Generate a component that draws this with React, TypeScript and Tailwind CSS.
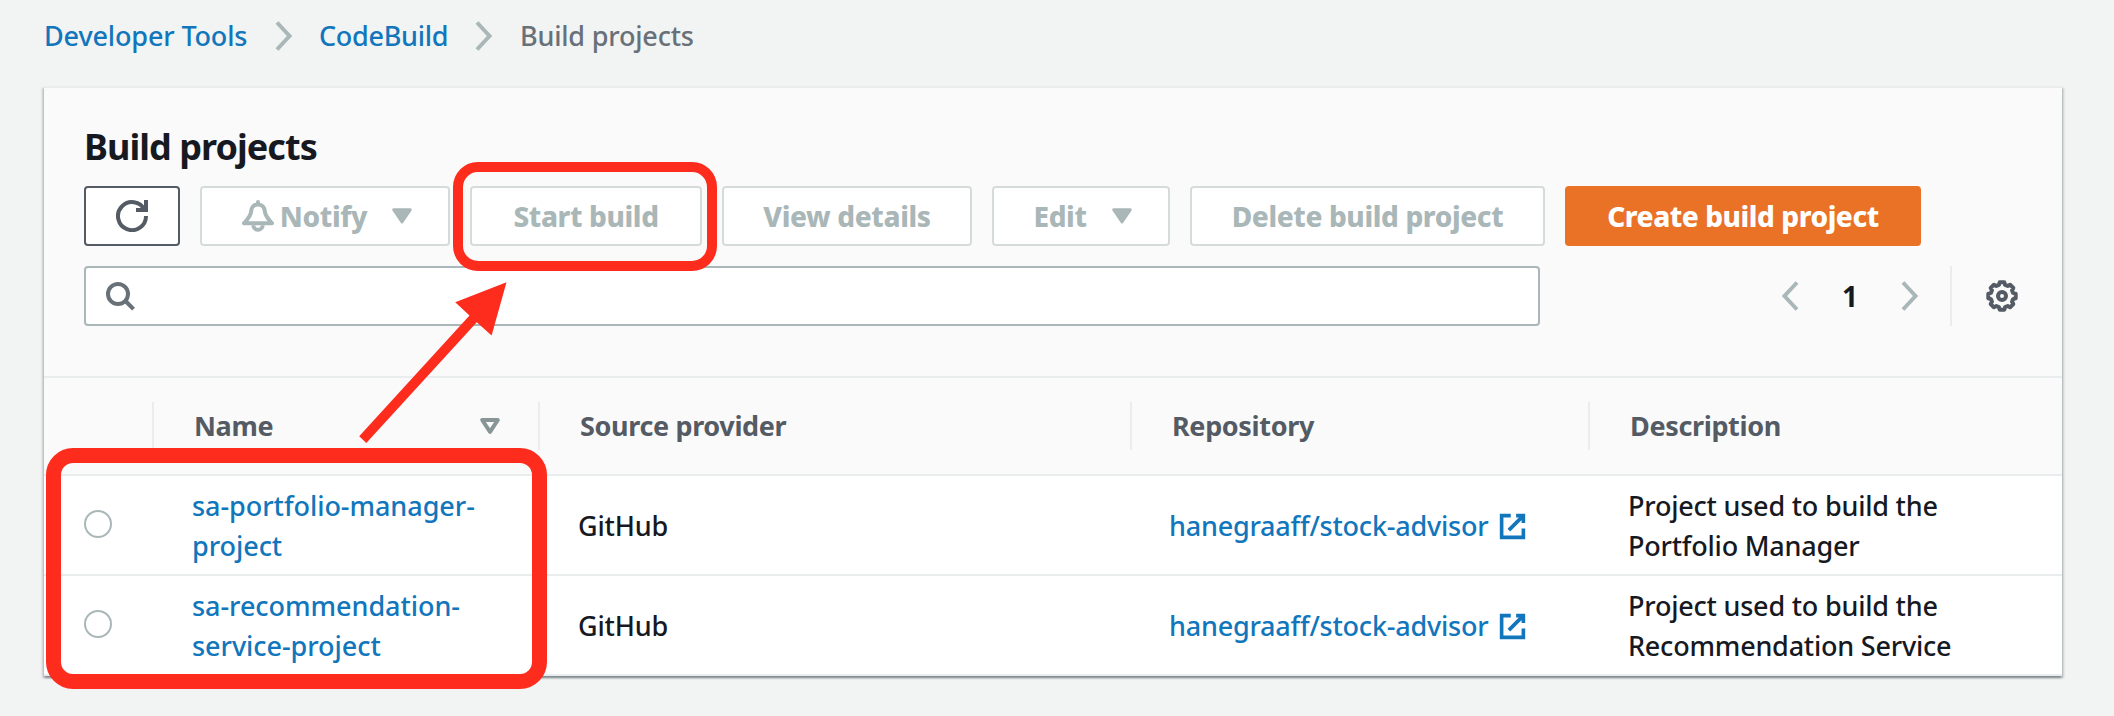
import type { ReactNode } from 'react';

const GEAR_PATH = (() => {
  const pts: string[] = [];
  for (let i = 0; i < 8; i++) {
    const a = i * 45;
    for (const [offset, radius] of [[-9.5, 6.95], [9.5, 6.95], [15.5, 5.75], [29.5, 5.75]]) {
      const t = ((a + offset) * Math.PI) / 180;
      pts.push(`${(8 + radius * Math.cos(t)).toFixed(2)} ${(8 + radius * Math.sin(t)).toFixed(2)}`);
    }
  }
  return `M${pts.join('L')}Z`;
})();

function Chevron({ left = false }: { left?: boolean }) {
  return (
    <svg width="20" height="32" viewBox="0 0 20 32" fill="none" stroke="#aab7b8" strokeWidth="4">
      <path d={left ? 'M17 2.5 4.5 16 17 29.5' : 'M3 2.5 15.5 16 3 29.5'} />
    </svg>
  );
}

function Caret() {
  return (
    <svg width="22" height="18" viewBox="0 0 22 18" fill="#aab7b8" stroke="#aab7b8" strokeWidth="3" strokeLinejoin="round">
      <path d="M2.7 2.7h16.6L11 15z" />
    </svg>
  );
}

function SortIcon() {
  return (
    <svg width="22" height="18" viewBox="0 0 22 18" fill="none" stroke="#879596" strokeWidth="4" strokeLinejoin="round">
      <path d="M3.2 3h15.6L11 14.8z" />
    </svg>
  );
}

function RefreshIcon() {
  return (
    <svg width="32" height="32" viewBox="0 0 16 16" fill="none" stroke="#545b64" strokeWidth="2">
      <path d="M10 5h5V0" />
      <path d="M15 8a7 7 0 1 1-.7-3" />
    </svg>
  );
}

function BellIcon() {
  return (
    <svg width="32" height="32" viewBox="0 0 16 16" fill="none" stroke="#aab7b8" strokeWidth="2" strokeLinejoin="round" strokeLinecap="round">
      <path d="M8 2.2C5.9 2.2 4.7 3.7 4.6 5.6 4.5 8 3 9.4 1 11.6h14C13 9.4 11.5 8 11.4 5.6 11.3 3.7 10.1 2.2 8 2.2zM8 2V1" />
      <path d="M5.7 12.6a2.3 2.3 0 0 0 4.6 0" strokeLinecap="butt" />
    </svg>
  );
}

function SearchIcon() {
  return (
    <svg width="32" height="32" viewBox="0 0 32 32" fill="none" stroke="#687078" strokeWidth="4">
      <circle cx="14" cy="14" r="10" />
      <path d="M21 20.5 29.5 29.2" />
    </svg>
  );
}

function GearIcon() {
  return (
    <svg width="32" height="32" viewBox="0 0 16 16" fill="none" stroke="#545b64" strokeWidth="2" strokeLinejoin="round">
      <path d={GEAR_PATH} />
      <circle cx="8" cy="8" r="2" />
    </svg>
  );
}

function ExternalIcon() {
  return (
    <svg width="29" height="29" viewBox="0 0 16 16" fill="none" stroke="#1176bb" strokeWidth="2">
      <path d="M10 2h4v4M6 10l8-8M14 9.05V14H2V2h5.04" />
    </svg>
  );
}

function DisabledButton({ className, children }: { className: string; children: ReactNode }) {
  return (
    <button
      className={`flex h-[60px] items-center justify-center whitespace-nowrap rounded-[4px] border-2 border-[#d5dbdb] bg-white text-[28px] font-extrabold leading-10 tracking-[-0.38px] text-[#aab7b8] ${className}`}
    >
      {children}
    </button>
  );
}

const COLUMNS = 'grid grid-cols-[108px_386px_592px_458px_474px]';

function HeaderCell({ children }: { children: ReactNode }) {
  return (
    <div className="flex items-center justify-between border-l-2 border-[#eaeded] pl-10 pr-[37px] text-[27px] font-bold leading-10 tracking-[-0.35px] text-[#545b64]">
      {children}
    </div>
  );
}

const PROJECTS = [
  { name: ['sa-portfolio-manager-', 'project'], description: ['Project used to build the', 'Portfolio Manager'] },
  { name: ['sa-recommendation-', 'service-project'], description: ['Project used to build the', 'Recommendation Service'] },
];

export default function App() {
  return (
    <div className="relative h-[716px] w-[2114px] overflow-hidden bg-[#f2f3f3] font-['Noto_Sans',sans-serif] text-[27px] font-[460] leading-10 text-[#16191f]">
      <nav className="flex h-[86px] items-start pl-[44px] pt-[16px]">
        <a className="w-[230px] tracking-[-0.15px] text-[#1176bb]">Developer Tools</a>
        <span className="w-[45px] pt-[4px]"><Chevron /></span>
        <a className="w-[155px] tracking-[-0.3px] text-[#1176bb]">CodeBuild</a>
        <span className="w-[46px] pt-[4px]"><Chevron /></span>
        <span className="tracking-[-0.2px] text-[#687078]">Build projects</span>
      </nav>

      <main className="ml-11 w-[2018px] border-t-2 border-[#eaeded] bg-white shadow-[0_2px_2px_0_rgba(0,28,36,0.3),2px_2px_2px_0_rgba(0,28,36,0.15),-2px_2px_2px_0_rgba(0,28,36,0.15)]">
        <header className="h-[290px] border-b-2 border-[#eaeded] bg-[#fafafa] pl-10 pt-[39px]">
          <h1 className="h-[59px] text-[36px] font-bold leading-10 tracking-[-0.95px]">Build projects</h1>
          <div className="flex gap-5">
            <button className="flex h-[60px] w-24 items-center justify-center rounded-[4px] border-2 border-[#545b64] bg-white">
              <RefreshIcon />
            </button>
            <DisabledButton className="w-[250px] pl-[5px]">
              <BellIcon />
              <span className="ml-[6px]">Notify</span>
              <span className="ml-[24px]"><Caret /></span>
            </DisabledButton>
            <DisabledButton className="w-[232px]">Start build</DisabledButton>
            <DisabledButton className="w-[250px]">View details</DisabledButton>
            <DisabledButton className="w-[178px] pl-[4px]">
              <span>Edit</span>
              <span className="ml-[24px]"><Caret /></span>
            </DisabledButton>
            <DisabledButton className="w-[355px]">Delete build project</DisabledButton>
            <button className="flex h-[60px] w-[356px] items-center justify-center whitespace-nowrap rounded-[4px] bg-[#ea7226] text-[28px] font-extrabold tracking-[-0.45px] text-white">
              Create build project
            </button>
          </div>
          <div className="mt-5 flex h-[60px] items-center">
            <div className="flex h-[60px] w-[1456px] items-center rounded-[4px] border-2 border-[#aab7b8] bg-white pl-[18px]">
              <SearchIcon />
            </div>
            <span className="ml-[240px]"><Chevron left /></span>
            <span className="w-[100px] text-center text-[28px] font-bold">1</span>
            <Chevron />
            <span className="ml-[30px] h-[60px] w-[2px] bg-[#eaeded]" />
            <span className="ml-[34px]"><GearIcon /></span>
          </div>
        </header>

        <div className={`${COLUMNS} h-[98px] border-b-2 border-[#eaeded] bg-[#fafafa] pb-6 pt-6`}>
          <div />
          <HeaderCell>
            Name
            <SortIcon />
          </HeaderCell>
          <HeaderCell>Source provider</HeaderCell>
          <HeaderCell>Repository</HeaderCell>
          <HeaderCell>Description</HeaderCell>
        </div>

        {PROJECTS.map((project) => (
          <div key={project.name[0]} className={`${COLUMNS} h-[100px] items-center border-b-2 border-[#eaeded] bg-white`}>
            <div className="mb-[2px] ml-10 size-7 rounded-full border-2 border-[#aab7b8] bg-white" />
            <a className="pl-[40px] pt-[2px] tracking-[-0.05px] text-[#1176bb]">
              {project.name[0]}
              <br />
              {project.name[1]}
            </a>
            <div className="pl-[40px] pt-[2px] tracking-[-0.2px]">GitHub</div>
            <a className="flex items-center gap-[10px] pl-[39px] pt-[2px] tracking-[-0.22px] text-[#1176bb]">
              hanegraaff/stock-advisor
              <ExternalIcon />
            </a>
            <div className="pl-[40px] pt-[2px] tracking-[-0.22px]">
              {project.description[0]}
              <br />
              {project.description[1]}
            </div>
          </div>
        ))}
      </main>

      <div className="absolute left-[453px] top-[162px] h-[109px] w-[264px] rounded-[25px] border-[10px] border-[#fe2c1d]" />
      <div className="absolute left-[46px] top-[448px] h-[241px] w-[501px] rounded-[27px] border-[15px] border-[#fe2c1d]" />
      <svg className="absolute left-[340px] top-[270px]" width="180" height="180" viewBox="0 0 180 180" fill="#fe2c1d">
        <path d="M166.5 12.3 115.2 32.2 129.5 45.6 19.2 166.3 26.3 173 136.8 52.3 151.6 65.6z" />
      </svg>
    </div>
  );
}
